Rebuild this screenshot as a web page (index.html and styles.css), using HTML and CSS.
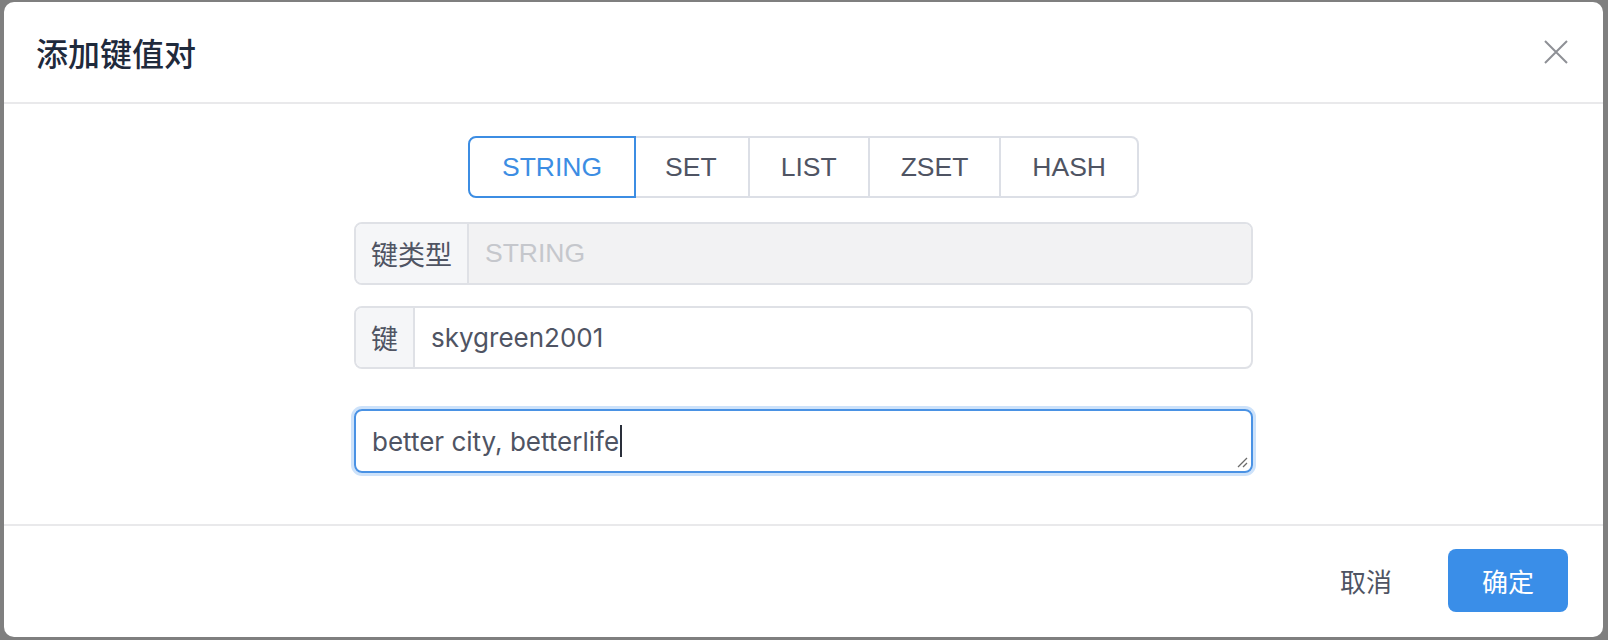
FILE: index.html
```html
<!DOCTYPE html>
<html lang="zh">
<head>
<meta charset="utf-8">
<title>添加键值对</title>
<link rel="stylesheet" href="styles.css">
</head>
<body>
<div class="dialog">
  <div class="dialog-header">
    <span class="dialog-title">添加键值对</span>
    <button class="close-btn" aria-label="close">
      <svg width="24" height="24" viewBox="0 0 24 24"><path d="M1 1 L23 23 M23 1 L1 23" stroke="#8e9096" stroke-width="2" fill="none"/></svg>
    </button>
  </div>
  <div class="dialog-body">
    <div class="tabs">
      <span class="tab active">STRING</span>
      <span class="tab">SET</span>
      <span class="tab">LIST</span>
      <span class="tab">ZSET</span>
      <span class="tab">HASH</span>
    </div>
    <div class="form">
      <div class="input-group disabled row-type">
        <span class="prepend">键类型</span>
        <span class="field">STRING</span>
      </div>
      <div class="input-group row-key">
        <span class="prepend">键</span>
        <span class="field">skygreen2001</span>
      </div>
      <div class="textarea">
        <span class="ta-text">better city, betterlife</span><span class="caret"></span>
        <svg class="grip" width="12" height="12" viewBox="0 0 12 12"><path d="M11 2 L2 11 M11 7 L7 11" stroke="#6b6b6b" stroke-width="1.3" fill="none"/></svg>
      </div>
    </div>
  </div>
  <div class="dialog-footer">
    <button class="btn btn-text">取消</button>
    <button class="btn btn-primary">确定</button>
  </div>
</div>
</body>
</html>
```
FILE: styles.css
```css
* { box-sizing: border-box; }
html, body {
  margin: 0;
  padding: 0;
  height: 640px;
  overflow: hidden;
  background: #7f7f7f;
  font-family: "Liberation Sans", "Noto Sans CJK SC", sans-serif;
}
.dialog {
  margin: 2px 5px 0 4px;
  height: 635px;
  background: #fff;
  border-radius: 10px;
  display: flex;
  flex-direction: column;
  overflow: hidden;
}
.dialog-header {
  height: 102px;
  flex: none;
  border-bottom: 2px solid #e9e9eb;
  display: flex;
  align-items: center;
  justify-content: space-between;
  padding: 0 35px 0 32px;
}
.dialog-title {
  font-family: "Noto Sans CJK SC", sans-serif;
  font-size: 32px;
  font-weight: 500;
  color: #1f2a3c;
  line-height: 1;
}
.close-btn {
  border: 0;
  background: none;
  padding: 0;
  width: 24px;
  height: 24px;
  display: flex;
}
.dialog-body {
  flex: none;
  height: 420px;
  padding-top: 32px;
  display: flex;
  flex-direction: column;
  align-items: center;
}
.tabs {
  display: flex;
  height: 62px;
}
.tab {
  display: flex;
  align-items: center;
  padding: 0 31px;
  font-size: 26.5px;
  color: #4f5463;
  border: 2px solid #dcdfe6;
  border-left-width: 0;
}
.tab:first-child {
  border-left-width: 2px;
  border-radius: 8px 0 0 8px;
  padding: 0 32px;
}
.tab:last-child {
  border-radius: 0 8px 8px 0;
}
.tab.active {
  color: #3c8de3;
  border-color: #3c8de3;
  border-right-width: 2px;
  margin-right: -2px;
  position: relative;
}
.form {
  width: 899px;
  display: flex;
  flex-direction: column;
  margin-top: 24px;
}
.input-group {
  display: flex;
  height: 63px;
  border: 2px solid #dfe1e6;
  border-radius: 8px;
  overflow: hidden;
  font-size: 26px;
}
.row-key { margin-top: 21px; }
.prepend {
  flex: none;
  display: flex;
  align-items: center;
  padding: 0 15px 0 15px;
  background: #f5f6f8;
  border-right: 2px solid #dfe1e6;
  color: #4f5463;
  font-family: "Noto Sans CJK SC", sans-serif;
  font-size: 27px;
}
.field {
  flex: 1;
  display: flex;
  align-items: center;
  padding: 0 16px;
  color: #4f5463;
  font-family: "Inter", "Liberation Sans", sans-serif;
}
.disabled .field {
  background: #f2f2f3;
  color: #c5c7cc;
  font-family: "Liberation Sans", sans-serif;
  font-size: 26.5px;
}
.textarea {
  margin-top: 40px;
  height: 64px;
  border: 2px solid #4a92e4;
  border-radius: 8px;
  box-shadow: 0 0 0 3px #cde2fa;
  padding: 0 16px;
  display: flex;
  align-items: center;
  position: relative;
  font-family: "Inter", "Liberation Sans", sans-serif;
  font-size: 26px;
  color: #4f5463;
}
.caret {
  display: inline-block;
  width: 2px;
  height: 32px;
  background: #2a2f3a;
  margin-left: 1px;
}
.grip {
  position: absolute;
  right: 3px;
  bottom: 3px;
}
.dialog-footer {
  flex: 1;
  display: flex;
  justify-content: flex-end;
  align-items: flex-start;
  border-top: 2px solid #e9e9eb;
  padding: 23px 35px 0 0;
}
.btn {
  height: 63px;
  border: 0;
  border-radius: 8px;
  font-family: "Noto Sans CJK SC", sans-serif;
  font-size: 26px;
  cursor: pointer;
}
.btn-text {
  background: none;
  color: #4f5463;
  padding: 0 28px;
  margin-right: 28px;
}
.btn-primary {
  width: 120px;
  background: #3a8ee8;
  color: #fff;
}
```
